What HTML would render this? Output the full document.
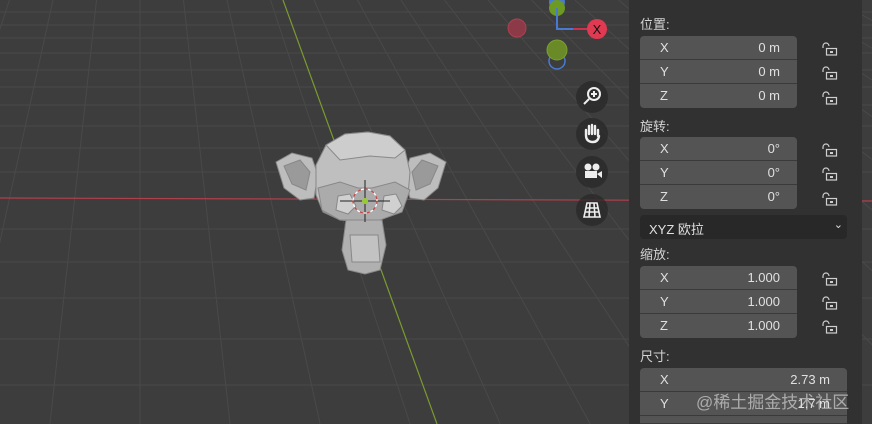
<!DOCTYPE html>
<html><head><meta charset="utf-8"><style>
html,body{margin:0;width:872px;height:424px;overflow:hidden}
body{background:#3d3d3d;font-family:"Liberation Sans","Noto Sans CJK SC",sans-serif;position:relative}
svg{position:absolute;left:0;top:0}
#panel{position:absolute;left:629px;top:0;width:233px;height:424px;background:#313131;overflow:hidden}
.lbl{position:absolute;left:11px;color:#d4d4d4;font-size:13px}
.fld{position:absolute;left:11px;width:157px;height:24px;background:#545454;color:#e0e0e0;font-size:13px;border-bottom:1px solid #3a3a3a;box-sizing:border-box}
.fld.w{width:207px}
.fld .a{position:absolute;left:20px;top:4px}
.fld .v{position:absolute;right:17px;top:4px}
.top{border-radius:4px 4px 0 0}.bot{border-radius:0 0 4px 4px;border-bottom:none}
.lock{position:absolute;left:191px;width:18px;height:14px}
.dd{position:absolute;left:11px;top:215px;width:207px;height:24px;background:#282828;border-radius:4px;color:#e0e0e0;font-size:13px}
.wm{position:absolute;left:696px;top:388px;color:rgba(230,230,230,.6);font-size:17px}
.nav{position:absolute;width:32px;height:32px;border-radius:50%;background:rgba(40,40,40,.75)}
</style></head><body>
<svg id="g" width="872" height="424"></svg>
<svg width="872" height="424" style="z-index:1">
<g stroke="#888" stroke-width="1">
<path d="M276 162 L292 153 L312 158 L318 175 L314 198 L300 200 L284 188 Z" fill="#bdbdbd"/>
<path d="M446 162 L430 153 L410 158 L404 175 L410 198 L424 200 L438 188 Z" fill="#bdbdbd"/>
<path d="M284 166 L300 160 L310 172 L306 190 L292 184 Z" fill="#9a9a9a"/>
<path d="M438 166 L422 160 L412 172 L416 190 L430 184 Z" fill="#9a9a9a"/>
<path d="M316 165 L326 145 L345 134 L368 132 L390 136 L405 150 L410 172 L408 195 L400 212 L380 220 L360 222 L340 220 L323 212 L316 195 Z" fill="#bfbfbf"/>
<path d="M326 145 L345 134 L368 132 L390 136 L405 150 L395 158 L370 156 L340 160 Z" fill="#cdcdcd"/>
<path d="M318 188 L340 182 L358 188 L372 188 L395 182 L410 190 L402 212 L380 220 L340 220 L322 210 Z" fill="#ababab"/>
<path d="M338 196 L350 194 L356 206 L348 214 L336 210 Z" fill="#d0d0d0"/>
<path d="M384 196 L396 194 L402 206 L394 214 L382 210 Z" fill="#d0d0d0"/>
<path d="M346 220 L382 220 L386 245 L380 270 L365 274 L348 270 L342 250 Z" fill="#b0b0b0"/>
<path d="M350 235 L378 235 L380 262 L352 262 Z" fill="#c2c2c2"/>
</g>
<g stroke="#222" stroke-width="1"><line x1="340" y1="201" x2="390" y2="201"/><line x1="365" y1="180" x2="365" y2="222"/></g>
<circle cx="365" cy="201" r="12" fill="none" stroke="#c44" stroke-width="1.3" stroke-dasharray="4 3"/>
<circle cx="365" cy="201" r="12" fill="none" stroke="#fff" stroke-width="1.3" stroke-dasharray="3 4" stroke-dashoffset="4"/>
<circle cx="365" cy="201" r="3" fill="#9c3"/>
<circle cx="517" cy="28" r="9" fill="#8c3a48" stroke="#b04050"/>
<circle cx="557" cy="61" r="8" fill="none" stroke="#4a7ad0" stroke-width="1.5"/>
<circle cx="557" cy="50" r="10" fill="#6a8a28" stroke="#7aa030"/>
<circle cx="557" cy="2" r="8" fill="#4a7ad0"/>
<circle cx="557" cy="8" r="8" fill="#6c9a22"/>
<path d="M557 8 V29 H590" stroke="#4a7ad0" stroke-width="2" fill="none"/>
<line x1="573" y1="29" x2="590" y2="29" stroke="#d03050" stroke-width="2"/>
<circle cx="597" cy="29" r="10" fill="#e03a52"/>
<text x="597" y="34" font-size="13" text-anchor="middle" fill="#111" font-family="Liberation Sans">X</text>
</svg>
<div class="nav" style="left:576px;top:81px;z-index:2"><svg width="32" height="32"><circle cx="18" cy="13" r="6" fill="none" stroke="#eee" stroke-width="2"/><path d="M18 10v6M15 13h6M13 18l-5 5" stroke="#eee" stroke-width="2"/></svg></div>
<div class="nav" style="left:576px;top:118px;z-index:2"><svg width="32" height="32"><path d="M10 17V12M13 16V8M16 16V7M19 16V8M22 18V12M10 17q0 7 7 7q5 0 6-6" stroke="#eee" stroke-width="2.4" fill="none" stroke-linecap="round"/></svg></div>
<div class="nav" style="left:576px;top:156px;z-index:2"><svg width="32" height="32"><circle cx="12" cy="11" r="3.5" fill="#eee"/><circle cx="20" cy="11" r="3.5" fill="#eee"/><rect x="9" y="15" width="12" height="7" fill="#eee"/><path d="M21 18l5-3v7z" fill="#eee"/></svg></div>
<div class="nav" style="left:576px;top:194px;z-index:2"><svg width="32" height="32"><path d="M11 9h10l3 14H8z M10 14h12 M9 18h14 M14 9l-1 14 M18 9l1 14" stroke="#eee" stroke-width="1.6" fill="none"/></svg></div>
<div id="panel">
<div class="lbl" style="top:14px">位置:</div>
<div class="fld top" style="top:36px"><span class="a">X</span><span class="v">0 m</span></div>
<div class="fld" style="top:60px"><span class="a">Y</span><span class="v">0 m</span></div>
<div class="fld bot" style="top:84px"><span class="a">Z</span><span class="v">0 m</span></div>
<div class="lbl" style="top:116px">旋转:</div>
<div class="fld top" style="top:137px"><span class="a">X</span><span class="v">0°</span></div>
<div class="fld" style="top:161px"><span class="a">Y</span><span class="v">0°</span></div>
<div class="fld bot" style="top:185px"><span class="a">Z</span><span class="v">0°</span></div>
<div class="dd"><span style="position:absolute;left:9px;top:4px">XYZ 欧拉</span><span style="position:absolute;right:4px;top:3px;font-size:11px">⌄</span></div>
<div class="lbl" style="top:244px">缩放:</div>
<div class="fld top" style="top:266px"><span class="a">X</span><span class="v">1.000</span></div>
<div class="fld" style="top:290px"><span class="a">Y</span><span class="v">1.000</span></div>
<div class="fld bot" style="top:314px"><span class="a">Z</span><span class="v">1.000</span></div>
<div class="lbl" style="top:346px">尺寸:</div>
<div class="fld w top" style="top:368px"><span class="a">X</span><span class="v">2.73 m</span></div>
<div class="fld w" style="top:392px"><span class="a">Y</span><span class="v">1.7 m</span></div>
<div class="fld w" style="top:416px;height:8px"></div>
</div>
<div class="wm">@稀土掘金技术社区</div>
<script>
var g=document.getElementById('g'),s='';
[12,25,38,53,70,87,105,126,148,172,229,262,298,339,385].forEach(function(y){s+='<line x1="0" y1="'+y+'" x2="872" y2="'+y+'" stroke="#494949" stroke-width="1"/>';});
for(var k=-8;k<22;k++){var xt=140+43.5*k,xb=140+(xt-140)*2.07;s+='<line x1="'+xt+'" y1="0" x2="'+xb+'" y2="424" stroke="#494949" stroke-width="1"/>';}
s+='<line x1="0" y1="198" x2="872" y2="201" stroke="#b0404c" stroke-width="1.2"/>';
s+='<line x1="283" y1="0" x2="437" y2="424" stroke="#7a9a30" stroke-width="1.2"/>';
g.innerHTML=s;
var p=document.getElementById('panel'),ys=[42,66,91,143,167,192,272,296,320];
ys.forEach(function(y){p.insertAdjacentHTML('beforeend','<svg class="lock" style="top:'+y+'px" viewBox="0 0 18 14"><path d="M3 6V4a3 3 0 0 1 6 0" stroke="#cfcfcf" stroke-width="1.2" fill="none"/><rect x="6.5" y="6.5" width="10" height="6.5" stroke="#cfcfcf" stroke-width="1.2" fill="none"/><rect x="10" y="9" width="3" height="2" fill="#cfcfcf"/></svg>');});
</script>
</body></html>
